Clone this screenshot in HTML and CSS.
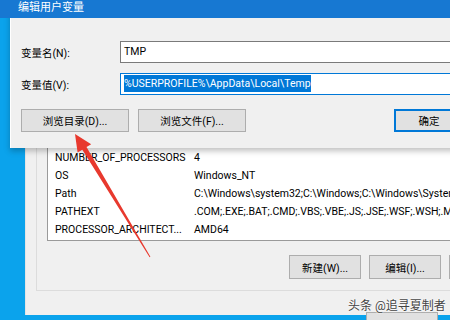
FILE: index.html
```html
<!DOCTYPE html>
<html lang="zh-CN">
<head>
  <meta charset="UTF-8">
  <title>编辑用户变量</title>
  <link rel="stylesheet" href="styles.css">
</head>
<body>
  <div class="desktop">

    <div class="env-window">
      <div class="group">
        <div class="var-list">
          <div class="var-row"><span class="var-name">NUMBER_OF_PROCESSORS</span><span>4</span></div>
          <div class="var-row"><span class="var-name">OS</span><span>Windows_NT</span></div>
          <div class="var-row"><span class="var-name">Path</span><span>C:\Windows\system32;C:\Windows;C:\Windows\System32\Wbem</span></div>
          <div class="var-row"><span class="var-name">PATHEXT</span><span>.COM;.EXE;.BAT;.CMD;.VBS;.VBE;.JS;.JSE;.WSF;.WSH;.MSC</span></div>
          <div class="var-row"><span class="var-name">PROCESSOR_ARCHITECT...</span><span>AMD64</span></div>
        </div>
        <div class="list-buttons">
          <button class="win-btn">新建(W)...</button>
          <button class="win-btn">编辑(I)...</button>
          <button class="win-btn">删除(L)</button>
        </div>
      </div>
      <div class="bottom-buttons">
        <button class="win-btn">确定</button>
      </div>
    </div>

    <div class="dialog">
      <div class="title-bar">编辑用户变量</div>
      <div class="dialog-body">
        <div class="field-grid">
          <label class="field-label">变量名(N):</label>
          <div class="field-input">TMP</div>
          <label class="field-label">变量值(V):</label>
          <div class="field-input focused"><span class="selected">%USERPROFILE%\AppData\Local\Temp</span></div>
        </div>
        <div class="dialog-buttons">
          <button class="win-btn browse">浏览目录(D)...</button>
          <button class="win-btn browse">浏览文件(F)...</button>
          <button class="win-btn default">确定</button>
        </div>
      </div>
    </div>

    <svg class="arrow" width="450" height="320" viewBox="0 0 450 320">
      <polygon points="75,134 91.2,144.2 86.5,147.1 150.4,256.7 149.6,257.3 82.3,149.7 77.6,152.6" fill="#e8392e"/>
    </svg>

    <div class="watermark">头条 @追寻夏制者</div>
  </div>
</body>
</html>
```

FILE: styles.css
```css
body {
  margin: 0;
  font-family: Roboto, "Noto Sans CJK SC", sans-serif;
  font-size: 10.5px;
  color: #000;
}
.desktop {
  position: relative;
  width: 450px;
  height: 320px;
  overflow: hidden;
  background-color: #0ba3ec;
}

/* window behind */
.env-window {
  position: absolute;
  left: 25px;
  top: 140px;
  width: 440px;
  height: 175px;
  background-color: #f0f0f0;
  border-left: 1px solid #e4e4e4;
  box-sizing: border-box;
}
.group {
  margin-left: 10px;
  height: 151px;
  border: 1px solid #dcdcdc;
  border-top: none;
  border-right: none;
  padding-left: 10px;
  box-sizing: border-box;
}
.var-list {
  background-color: #fff;
  border: 1px solid #9a9a9a;
  border-top: none;
  height: 101px;
  padding-top: 9px;
  padding-left: 7px;
  box-sizing: border-box;
  white-space: nowrap;
  overflow: hidden;
}
.var-row {
  display: flex;
  height: 18px;
  line-height: 18px;
}
.var-name {
  width: 139px;
  flex-shrink: 0;
  overflow: hidden;
}
.list-buttons {
  display: flex;
  gap: 8px;
  margin-top: 14px;
  padding-left: 242px;
}
.win-btn {
  font-family: Roboto, "Noto Sans CJK SC", sans-serif;
  font-size: 10.5px;
  color: #000;
  background-color: #e1e1e1;
  border: 1px solid #adadad;
  height: 24px;
  width: 72px;
  padding: 0;
  flex-shrink: 0;
}
.bottom-buttons {
  display: flex;
  padding-left: 340px;
  margin-top: 21px;
}

/* edit dialog */
.dialog {
  position: absolute;
  left: 10px;
  top: 0;
  width: 460px;
  height: 148px;
  background-color: #f0f0f0;
  box-shadow: 0 3px 6px rgba(0, 0, 0, 0.25);
}
.title-bar {
  height: 18px;
  line-height: 16px;
  margin-left: -10px;
  padding-left: 18px;
  background-color: #1778d2;
  color: #fff;
  font-size: 11px;
}
.dialog-body {
  border-left: 1px solid #fff;
  height: 130px;
  padding: 23px 0 0 10px;
  box-sizing: border-box;
}
.field-grid {
  display: grid;
  grid-template-columns: 99px 1fr;
  row-gap: 10px;
  align-items: center;
}
.field-input {
  height: 22px;
  line-height: 20px;
  padding-left: 3px;
  background-color: #fff;
  border: 1px solid #7a7a7a;
  border-right: none;
  box-sizing: border-box;
  white-space: nowrap;
}
.field-input.focused {
  border-color: #0078d7;
}
.selected {
  background-color: #0078d7;
  color: #fff;
  padding: 2px 0;
}
.dialog-buttons {
  display: flex;
  gap: 9px;
  margin-top: 14px;
}
.win-btn.browse {
  width: 108px;
  height: 23px;
}
.win-btn.default {
  margin-left: 139px;
  width: 70px;
  height: 23px;
  border: 2px solid #0078d7;
}

.arrow {
  position: absolute;
  left: 0;
  top: 0;
}
.watermark {
  position: absolute;
  left: 348px;
  top: 296px;
  font-size: 12px;
  color: #444;
  white-space: nowrap;
  text-shadow: 0 0 2px #fff, 0 0 2px #fff;
}
```
